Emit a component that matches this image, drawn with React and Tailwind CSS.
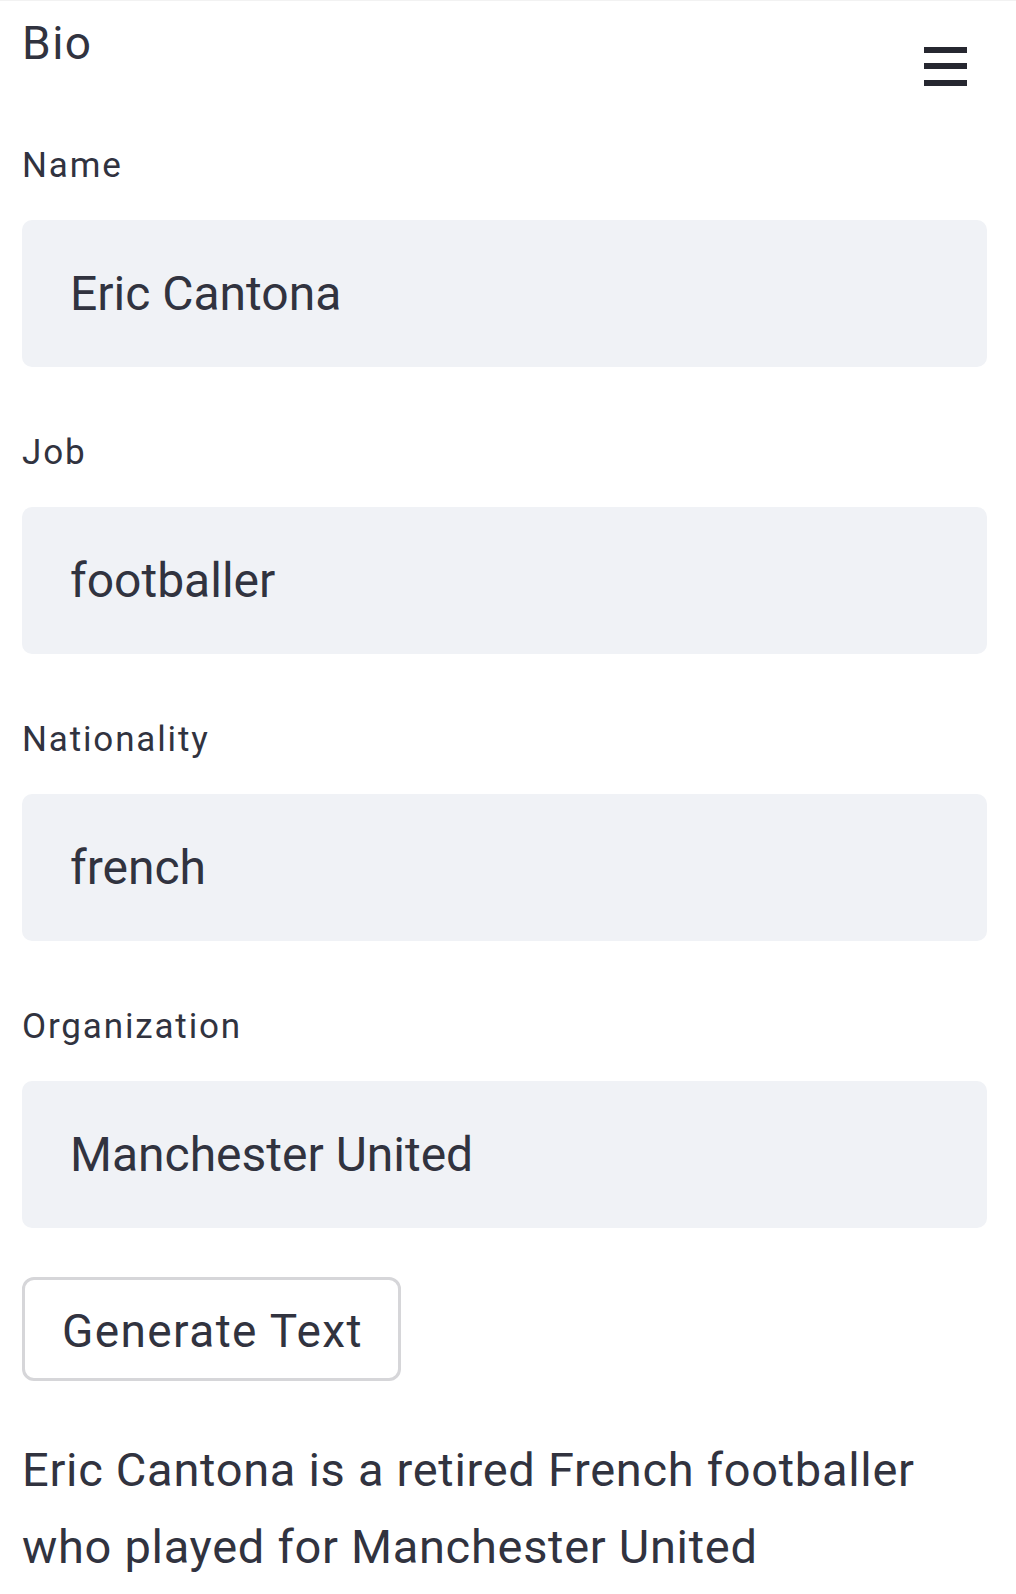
import React from "react";

const fields = [
  { label: "Name", value: "Eric Cantona" },
  { label: "Job", value: "footballer" },
  { label: "Nationality", value: "french" },
  { label: "Organization", value: "Manchester United" },
];

function Field({ label, value, first }) {
  return (
    <div className={first ? "mt-[62px]" : "mt-[68px]"}>
      <div className="text-[35px] leading-[35px] h-[35px] tracking-[1.85px]">{label}</div>
      <div className="mt-[37px] h-[147px] rounded-[10px] bg-[#f0f2f6] flex items-center pl-[48px] text-[48px] leading-[48px]">
        {value}
      </div>
    </div>
  );
}

export default function App() {
  return (
    <div
      className="min-h-[1594px] bg-white text-[#31333f] border-t border-[#f2f2f2]"
      style={{ fontFamily: "Roboto, 'Noto Sans', sans-serif" }}
    >
      <div className="pl-[22px] pr-[29px] pt-[19px]">
        <div className="flex justify-between items-start h-[66px]">
          <div className="text-[46px] leading-[46px] tracking-[1.5px]">Bio</div>
          <svg width="43" height="39" viewBox="0 0 43 39" className="mt-[27px] mr-[20px]">
            <rect x="0" y="0" width="43" height="6" fill="#262730" />
            <rect x="0" y="16" width="43" height="6" fill="#262730" />
            <rect x="0" y="33" width="43" height="6" fill="#262730" />
          </svg>
        </div>
        {fields.map((f, i) => (
          <Field key={f.label} label={f.label} value={f.value} first={i === 0} />
        ))}
        <button className="mt-[49px] h-[104px] w-[379px] rounded-[12px] border-[3px] border-[#d6d6d9] bg-white text-left pl-[37px] pt-[4px] text-[46px] leading-[46px] tracking-[1.4px] text-[#31333f]">
          Generate Text
        </button>
        <p className="mt-[50px] text-[47px] leading-[77px] tracking-[0.7px]">
          Eric Cantona is a retired French footballer
          <br />
          who played for Manchester United
        </p>
      </div>
    </div>
  );
}
